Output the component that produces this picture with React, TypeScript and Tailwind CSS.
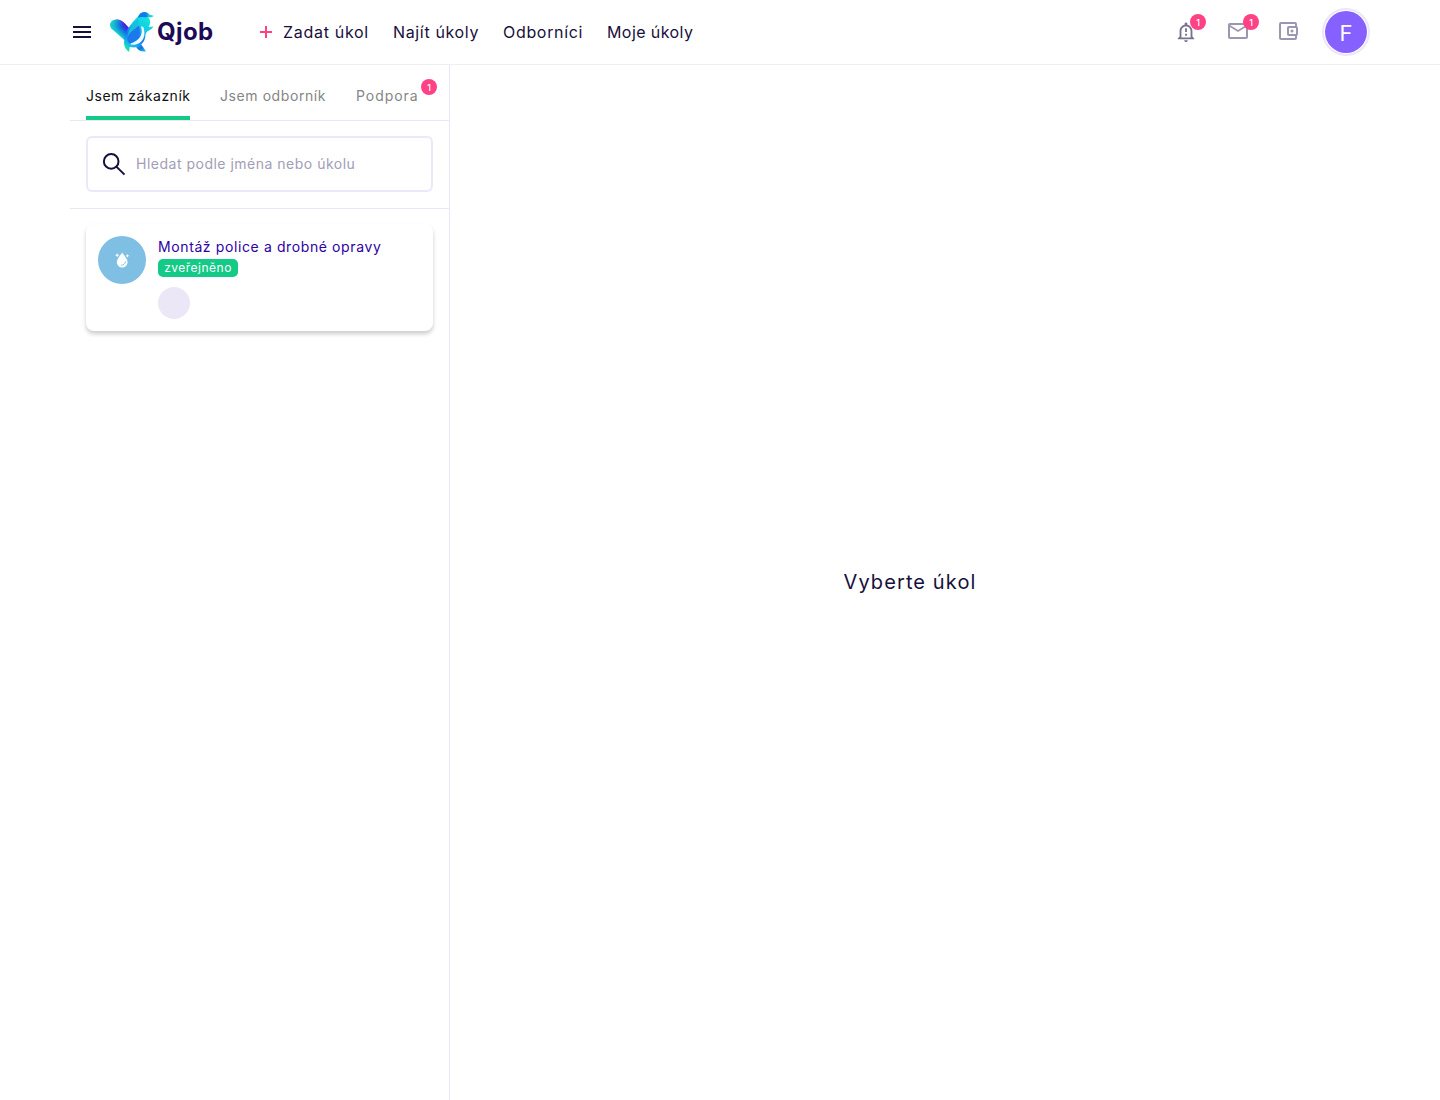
import type { ReactNode } from 'react';
import { MdMailOutline, MdMenu, MdOutlineAccountBalanceWallet, MdOutlineNotificationImportant } from 'react-icons/md';

const tabs = [
  { label: 'Jsem zákazník', width: 'w-[104px]', tracking: 'tracking-[0.5px]', active: true },
  { label: 'Jsem odborník', width: 'w-[106px]', tracking: 'tracking-[0.58px]', active: false },
  { label: 'Podpora', width: 'w-[62px]', tracking: 'tracking-[0.95px]', active: false, count: 1 },
];

export default function App() {
  return (
    <div className="flex h-[1100px] flex-col overflow-hidden bg-white font-[Inter,sans-serif] text-[#170f3c]">
      <Header />
      <main className="mx-auto flex min-h-0 w-[1300px] flex-1">
        <Sidebar />
        <section className="flex flex-1 items-center justify-center">
          <h1 className="mb-0.5 text-xl leading-7 tracking-[1.1px] whitespace-nowrap">Vyberte úkol</h1>
        </section>
      </main>
    </div>
  );
}

function Header() {
  return (
    <header className="h-[65px] shrink-0 border-b border-[#efeff1]">
      <div className="mx-auto flex h-16 w-[1300px] items-center">
        <MdMenu className="size-6 shrink-0" />
        <a href="#" className="ml-4 flex h-16 w-[146px] shrink-0 items-center">
          <BirdLogo />
          <span className="ml-[3px] text-[24px] leading-8 font-bold tracking-[0.4px] text-[#1c0a58]">Qjob</span>
        </a>
        <nav className="flex items-center gap-6 text-base whitespace-nowrap">
          <a href="#" className="flex items-center">
            <svg viewBox="0 0 20 20" className="size-5 text-[#ff4185]" stroke="currentColor" strokeWidth="2">
              <path d="M10 4v12M4 10h12" />
            </svg>
            <span className="ml-[7px] w-[86px] tracking-[0.7px]">Zadat úkol</span>
          </a>
          <a href="#" className="w-[86px] tracking-[0.65px]">Najít úkoly</a>
          <a href="#" className="w-[80px] tracking-[0.68px]">Odborníci</a>
          <a href="#" className="w-[86px] tracking-[0.42px]">Moje úkoly</a>
        </nav>
        <div className="ml-auto flex items-center text-[#9c96ae]">
          <IconButton count={1}>
            <MdOutlineNotificationImportant className="mx-auto mt-px size-[22px] text-[#77718f]" />
          </IconButton>
          <div className="ml-7">
            <IconButton count={1} wide>
              <MdMailOutline className="size-6" />
            </IconButton>
          </div>
          <MdOutlineAccountBalanceWallet className="mr-[22px] mb-0.5 ml-[26px] size-6" />
          <div className="flex size-12 items-center justify-center rounded-full border-2 border-[#ebe6fb]">
            <div className="flex size-[42px] items-center justify-center rounded-full bg-[#8661ff] pt-0.5 text-[22px] text-white">F</div>
          </div>
        </div>
      </div>
    </header>
  );
}

function IconButton({ children, count, wide = false }: { children: ReactNode; count: number; wide?: boolean }) {
  return (
    <button type="button" className="relative mb-0.5 block size-6">
      {children}
      <span className={`absolute -top-[5px] ${wide ? 'left-[17px]' : 'left-4'}`}>
        <Badge count={count} />
      </span>
    </button>
  );
}

function Badge({ count }: { count: number }) {
  return <span className="flex size-4 items-center justify-center rounded-full bg-[#ff4185] text-[9px] leading-none font-medium text-white">{count}</span>;
}

function Sidebar() {
  return (
    <aside className="w-[380px] shrink-0 border-r border-[#e9e6f7]">
      <div className="flex h-14 gap-[30px] border-b border-[#e9e6f7] px-4 text-sm whitespace-nowrap">
        {tabs.map((tab) => (
          <button
            key={tab.label}
            type="button"
            className={`relative flex shrink-0 items-center border-b-4 pt-[11px] text-left ${tab.width} ${tab.tracking} ${tab.active ? 'border-[#13ca87] text-[#111]' : 'border-transparent text-[#858585]'}`}
          >
            {tab.label}
            {tab.count ? (
              <span className="absolute top-3.5 -right-[19px] tracking-normal">
                <Badge count={tab.count} />
              </span>
            ) : null}
          </button>
        ))}
      </div>
      <div className="border-b border-[#e9e6f7] px-4 pt-[15px] pb-4">
        <label className="flex h-14 items-center rounded-md border-2 border-[#ebe8f9] pl-3.5">
          <svg viewBox="0 0 24 24" className="size-6 shrink-0" fill="none" stroke="currentColor" strokeWidth="2">
            <circle cx="9.2" cy="9.4" r="7.3" />
            <path d="M14.4 14.6 22.5 22.6" />
          </svg>
          <input
            type="text"
            placeholder="Hledat podle jména nebo úkolu"
            className="ml-2.5 w-full bg-transparent text-sm tracking-[0.5px] outline-none placeholder:text-[#a39db6]"
          />
        </label>
      </div>
      <div className="px-4 pt-[15px]">
        <TaskCard />
      </div>
    </aside>
  );
}

function TaskCard() {
  return (
    <article className="flex h-[107px] rounded-lg bg-white p-3 shadow-[0_3px_4px_rgba(0,0,0,0.2)]">
      <div className="flex size-12 shrink-0 items-center justify-center rounded-full bg-[#7fbfe4]">
        <svg viewBox="0 0 16 18" className="-mt-px h-[18px] w-4" fill="white">
          <path d="M8.2 1.4C7.2 3.6 2.8 7.6 2.8 11.2a5.4 5.4 0 0 0 10.8 0C13.6 7.6 9.2 3.6 8.2 1.4Z" />
          <path d="M6.8 14.2c2.5.2 4.6-1.5 4.9-3.9" fill="none" stroke="#7fbfe4" strokeWidth="0.9" />
          <path d="m3.2 2.1.7 1.4 1.4.7-1.4.7-.7 1.4-.7-1.4-1.4-.7 1.4-.7ZM13.4 3.1l.6 1.1 1.1.6-1.1.6-.6 1.1-.6-1.1-1.1-.6 1.1-.6Z" />
        </svg>
      </div>
      <div className="ml-3">
        <h2 className="text-sm leading-[22px] tracking-[0.61px] whitespace-nowrap text-[#2e00a3]">Montáž police a drobné opravy</h2>
        <span className="mt-px flex h-[18px] w-20 items-center justify-center rounded-[5px] bg-[#13ca87] text-xs leading-none tracking-[0.5px] text-white">zveřejněno</span>
        <div className="mt-2.5 size-8 rounded-full bg-[#ebe7f6]" />
      </div>
    </article>
  );
}

function BirdLogo() {
  return (
    <svg viewBox="0 0 44 40" className="h-10 w-11 shrink-0">
      <defs>
        <linearGradient id="wing" gradientUnits="userSpaceOnUse" x1="4" y1="19" x2="13" y2="10">
          <stop offset="0" stopColor="#12dfc4" />
          <stop offset="0.3" stopColor="#0fa5d6" />
          <stop offset="0.65" stopColor="#1c55e6" />
          <stop offset="1" stopColor="#4b19dc" />
        </linearGradient>
        <linearGradient id="wingTip" gradientUnits="userSpaceOnUse" x1="1" y1="9" x2="10" y2="17">
          <stop offset="0" stopColor="#14e5bd" />
          <stop offset="1" stopColor="#14a8e5" stopOpacity="0" />
        </linearGradient>
        <linearGradient id="body" x1="0.8" y1="0" x2="0.3" y2="1">
          <stop offset="0" stopColor="#10eadc" />
          <stop offset="0.4" stopColor="#13c9e6" />
          <stop offset="0.7" stopColor="#1b70f0" />
          <stop offset="1" stopColor="#16c1ee" />
        </linearGradient>
        <linearGradient id="head" x1="0" y1="0.5" x2="1" y2="0.5">
          <stop offset="0" stopColor="#137be4" />
          <stop offset="0.5" stopColor="#1279ee" />
          <stop offset="0.75" stopColor="#11dfcf" />
          <stop offset="1" stopColor="#0dbcd8" />
        </linearGradient>
        <linearGradient id="tail" x1="0" y1="0" x2="1" y2="1">
          <stop offset="0" stopColor="#1bd3eb" />
          <stop offset="0.5" stopColor="#176ce9" />
          <stop offset="1" stopColor="#13d5d7" />
        </linearGradient>
      </defs>
      <path d="M1.4 16.5C-1 13 .2 9.6 3.5 8.2c4-1.7 7.8-.5 11.5 3.4l5 5.4-4 12.5Z" fill="url(#wing)" />
      <path d="M1.4 16.5C-1 13 .2 9.6 3.5 8.2c4-1.7 7.8-.5 11.5 3.4l5 5.4-4 12.5Z" fill="url(#wingTip)" />
      <path d="M14 28.5c-.5 4.5 1 8.5 5 11.5l1-6.2Z" fill="#19dbb5" />
      <path d="m25.5 34.5 5.5-2.5 5 7.5c-4.5.5-7.8-.8-10.5-5Z" fill="url(#tail)" />
      <path d="M28 4.5C24.5 8 20.5 12 16.5 19.5c-4.8 8-1.7 15 5 15.8 8 .9 13.8-5 13.9-11.8.2-2.1 1.1-3.8 3-4.7 2.1-.9 4.3-2.3 5-4.2l-4.7.3c1.5-2.2 1.9-6.2.6-8.4L36 4Z" fill="url(#body)" />
      <path d="M28 7c-4 2.7-9.3 9-10.7 18.5l4.3-3.7C27.2 16.5 29.3 12.5 28 7Z" fill="#18bfda" />
      <path d="M17.5 25c2-5 7.4-7.7 11.4-11.4 2.5 6.8.6 14.3-8.5 18.3-2.2-1.4-3.6-3.6-2.9-6.9Z" fill="#1b79ed" />
      <path d="M31 14.6c2.3 7-.3 13.8-10.8 17.1 1 1.5 3.8 1.4 6.5.5 7.1-2.5 9.2-9 6.8-17-.8-.9-1.5-1-2.5-.6Z" fill="#eafcff" />
      <path d="M27.7 5.6C29 1.8 31.6 0 34.5 0c2.4 0 4 1 4.7 2.5l4.8 1.6c-2.2 1.3-4.2 1.5-6.3 1.2-3.4-.4-6.3-.8-10 .3Z" fill="url(#head)" />
    </svg>
  );
}
